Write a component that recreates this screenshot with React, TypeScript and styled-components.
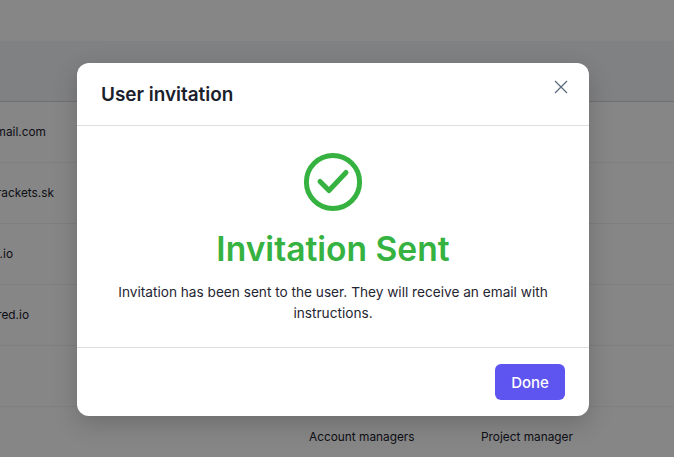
import React from "react";
import styled, { createGlobalStyle } from "styled-components";

const Global = createGlobalStyle`
  html, body { margin: 0; padding: 0; height: 100%; background: #fff; }
  body { font-family: Inter, "Liberation Sans", sans-serif; overflow: hidden; }
  * { box-sizing: border-box; }
`;

const Page = styled.div`
  position: relative;
  width: 674px;
  height: 457px;
  overflow: hidden;
  background: #fff;
`;

const TopBar = styled.div`
  height: 41px;
  background: #fff;
`;

const TableHead = styled.div`
  height: 61px;
  background: #f4f6f9;
  border-bottom: 1px solid #d4d5d7;
`;

const Row = styled.div`
  display: grid;
  grid-template-columns: 60px 249px 172px 1fr;
  align-items: center;
  height: 61px;
  border-bottom: 1px solid #f0f1f2;
  font-size: 11.85px;
  color: #1a202c;
`;

const EmailCell = styled.div<{ $end: number }>`
  display: flex;
  justify-content: flex-end;
  width: ${(p) => p.$end}px;
  overflow: hidden;
  white-space: nowrap;
`;

const RoleCell = styled.div`
  white-space: nowrap;
`;

const Overlay = styled.div`
  position: absolute;
  inset: 0;
  padding: 63px 0 0 77px;
  background: rgba(0, 0, 0, 0.475);
`;

const Modal = styled.div`
  width: 512px;
  height: 353px;
  display: flex;
  flex-direction: column;
  border-radius: 12px;
  background: #fff;
  box-shadow: 0 8px 24px rgba(0, 0, 0, 0.18);
`;

const Header = styled.header`
  display: flex;
  align-items: center;
  justify-content: space-between;
  height: 63px;
  padding: 0 20px 0 24px;
  border-bottom: 1px solid #dcdddf;
`;

const Title = styled.h2`
  margin: 0;
  padding-top: 1px;
  font-size: 18.9px;
  font-weight: 600;
  line-height: 62px;
  color: #1a202c;
`;

const CloseButton = styled.button`
  display: flex;
  width: 16px;
  height: 16px;
  margin-bottom: 14px;
  padding: 0;
  border: 0;
  background: none;
  color: #5c6b7e;
`;

const Body = styled.div`
  flex: 1;
  display: flex;
  flex-direction: column;
  align-items: center;
  padding: 24px 24px 0;
  border-bottom: 1px solid #dcdddf;
`;

const Heading = styled.h1`
  margin: 0;
  padding-top: 15px;
  font-size: 33.6px;
  line-height: 40px;
  font-weight: 600;
  color: #35b23f;
`;

const Message = styled.p`
  margin: 13px 0 0;
  font-size: 13.65px;
  line-height: 21px;
  text-align: center;
  color: #1f2532;
`;

const Footer = styled.footer`
  display: flex;
  justify-content: flex-end;
  height: 68px;
  padding: 16px 24px 0;
`;

const DoneButton = styled.button`
  width: 70px;
  height: 36px;
  border: 0;
  border-radius: 6px;
  background: #5e54f0;
  color: #fff;
  font-family: inherit;
  font-size: 15px;
  font-weight: 500;
`;

const rows = [
  { email: "mail.com", end: 46 },
  { email: "rackets.sk", end: 54 },
  { email: ".io", end: 13 },
  { email: "red.io", end: 29 },
  { email: "", end: 0 },
  { email: "", end: 0, group: "Account managers", role: "Project manager" },
];

export default function App() {
  return (
    <Page>
      <Global />
      <TopBar />
      <TableHead />
      {rows.map((r, i) => (
        <Row key={i}>
          <EmailCell $end={r.end}>{r.email}</EmailCell>
          <span />
          <RoleCell>{r.group}</RoleCell>
          <RoleCell>{r.role}</RoleCell>
        </Row>
      ))}
      <Overlay>
        <Modal>
          <Header>
            <Title>User invitation</Title>
            <CloseButton aria-label="Close">
              <svg width="16" height="16" viewBox="0 0 16 16" fill="none">
                <path d="M2 2l12 12M14 2L2 14" stroke="currentColor" strokeWidth="1.3" />
              </svg>
            </CloseButton>
          </Header>
          <Body>
            <svg width="64" height="64" viewBox="0 0 64 64" fill="none">
              <circle cx="32" cy="32" r="26.6" stroke="#35b23f" strokeWidth="5" />
              <path d="M19 31.5l9 9 17-18" stroke="#35b23f" strokeWidth="5" strokeLinecap="round" strokeLinejoin="round" />
            </svg>
            <Heading>Invitation Sent</Heading>
            <Message>Invitation has been sent to the user. They will receive an email with instructions.</Message>
          </Body>
          <Footer>
            <DoneButton>Done</DoneButton>
          </Footer>
        </Modal>
      </Overlay>
    </Page>
  );
}
